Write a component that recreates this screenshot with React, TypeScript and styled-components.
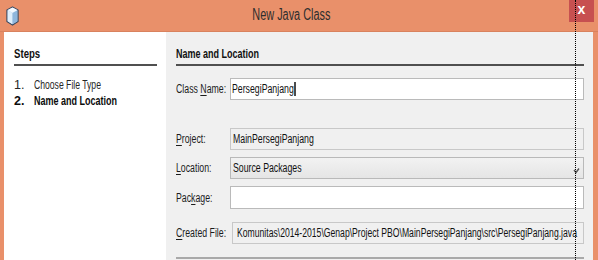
import React from 'react'
import styled, { createGlobalStyle } from 'styled-components'

const GlobalStyle = createGlobalStyle`
	html, body {
		margin: 0;
		padding: 0;
		background: #e9906a;
	}
	body {
		font-family: 'Liberation Sans', Arial, sans-serif;
		font-size: 12.5px;
		color: #111111;
	}
`

// the dialog font is a narrow one, so text is squeezed horizontally
const Txt = styled.span<{ $s?: number; $center?: boolean }>`
	display: inline-block;
	flex: none;
	white-space: nowrap;
	transform: scaleX(${(p) => p.$s ?? 0.7});
	transform-origin: ${(p) => (p.$center ? 'center' : 'left')} center;
`

const CubeIcon = () => (
	<svg width='13' height='20' viewBox='0 0 13 20'>
		<path
			d='M6.5 1 L12 4 L12 15.5 L6.5 19 L1 15.5 L1 4 Z'
			fill='#bcd6ef'
			stroke='#3a4a63'
			strokeWidth='1.3'
			strokeLinejoin='round'
		/>
		<path d='M1.6 4.3 L6.5 7 L6.5 18.2 L1.6 15.2 Z' fill='#dfeefb' />
		<path d='M6.5 7 L11.4 4.3 L11.4 15.2 L6.5 18.2 Z' fill='#8fb6dc' />
		<path d='M1.6 4 L6.5 1.6 L11.4 4 L6.5 6.8 Z' fill='#f4f9ff' />
	</svg>
)

const ComboArrow = () => (
	<svg width='7' height='6' viewBox='0 0 7 6'>
		<path d='M1 2 L3 4.5 L6 0.5' fill='none' stroke='#555555' strokeWidth='1.4' />
	</svg>
)

function App() {
	return (
		<>
			<GlobalStyle />
			<Window>
				<TitleBar>
					<IconSlot>
						<CubeIcon />
					</IconSlot>
					<Title>
						<Txt $s={0.68} $center>
							New Java Class
						</Txt>
					</Title>
					<CloseButton>x</CloseButton>
				</TitleBar>
				<Body>
					<StepsPanel>
						<Heading>
							<Txt $s={0.77}>Steps</Txt>
						</Heading>
						<StepList>
							<Step>
								<StepNo>1.</StepNo>
								<Txt $s={0.69}>Choose File Type</Txt>
							</Step>
							<Step $current>
								<StepNo>2.</StepNo>
								<Txt $s={0.72}>Name and Location</Txt>
							</Step>
						</StepList>
					</StepsPanel>
					<FormPanel>
						<Heading>
							<Txt $s={0.72}>Name and Location</Txt>
						</Heading>
						<Row $top={12}>
							<Label>
								<Txt>
									Class <u>N</u>ame:
								</Txt>
							</Label>
							<Field $pad={1}>
								<Txt>
									PersegiPanjang
									<Caret />
								</Txt>
							</Field>
						</Row>
						<Row $top={28}>
							<Label>
								<Txt>
									<u>P</u>roject:
								</Txt>
							</Label>
							<Field $readOnly>
								<Txt>MainPersegiPanjang</Txt>
							</Field>
						</Row>
						<Row $top={7}>
							<Label>
								<Txt>
									<u>L</u>ocation:
								</Txt>
							</Label>
							<Combo>
								<Txt>Source Packages</Txt>
								<ArrowSlot>
									<ComboArrow />
								</ArrowSlot>
							</Combo>
						</Row>
						<Row $top={7}>
							<Label>
								<Txt>
									Pac<u>k</u>age:
								</Txt>
							</Label>
							<Field $tall />
						</Row>
						<Row $top={13}>
							<Label>
								<Txt>
									<u>C</u>reated File:
								</Txt>
							</Label>
							<Field $readOnly $pad={4} $shift={2}>
								<Txt $s={0.69}>
									Komunitas\2014-2015\Genap\Project
									PBO\MainPersegiPanjang\src\PersegiPanjang.java
								</Txt>
							</Field>
						</Row>
						<Separator />
					</FormPanel>
				</Body>
				<DottedGuide />
			</Window>
		</>
	)
}

const Window = styled.div`
	position: relative;
	width: 598px;
	height: 260px;
	overflow: hidden;
	background: #e9906a;
	display: flex;
	flex-direction: column;
`

const TitleBar = styled.div`
	height: 32px;
	flex: none;
	display: flex;
	align-items: flex-start;
	border-bottom: 1px solid #d9825e;
	box-sizing: border-box;
`

const IconSlot = styled.div`
	padding: 6px 0 0 6px;
`

const Title = styled.div`
	flex: 1;
	display: flex;
	justify-content: center;
	font-size: 16px;
	color: #2e2e2e;
	padding-top: 6px;
	margin-right: 6px;
`

const CloseButton = styled.div`
	width: 25px;
	height: 22px;
	margin-right: 4px;
	background: #c75050;
	color: #ffffff;
	font-weight: bold;
	font-size: 14px;
	line-height: 19px;
	text-align: center;
`

const Body = styled.div`
	flex: 1;
	display: flex;
	padding: 0 5px 0 4px;
`

const StepsPanel = styled.div`
	width: 162px;
	background: #ffffff;
	padding: 15px 9px 0 10px;
	box-sizing: border-box;
`

const Heading = styled.div`
	font-weight: bold;
	line-height: 15px;
	padding-bottom: 2px;
	border-bottom: 2px solid #505050;
	overflow: hidden;
`

const StepList = styled.div`
	margin-top: 12px;
	display: flex;
	flex-direction: column;
	gap: 1px;
`

const Step = styled.div<{ $current?: boolean }>`
	display: flex;
	line-height: 15px;
	font-weight: ${(p) => (p.$current ? 'bold' : 'normal')};
	color: ${(p) => (p.$current ? '#0c0c0c' : '#262626')};
`

const StepNo = styled.span`
	width: 20px;
	flex: none;
`

const FormPanel = styled.div`
	flex: 1;
	min-width: 0;
	background: #f0f0f0;
	padding: 15px 9px 0 10px;
	display: flex;
	flex-direction: column;
`

const Row = styled.div<{ $top: number }>`
	display: grid;
	grid-template-columns: 54px minmax(0, 1fr);
	align-items: center;
	margin-top: ${(p) => p.$top}px;
`

const Label = styled.div`
	color: #1c1c1c;
	u {
		text-underline-offset: 2px;
	}
`

const Field = styled.div<{ $readOnly?: boolean; $tall?: boolean; $pad?: number; $shift?: number }>`
	height: ${(p) => (p.$tall ? 23 : 22)}px;
	box-sizing: border-box;
	border: 1px solid ${(p) => (p.$readOnly ? '#c8c8c8' : '#bababa')};
	background: ${(p) => (p.$readOnly ? '#f0f0f0' : '#ffffff')};
	padding: 0 ${(p) => p.$pad ?? 2}px;
	margin-left: ${(p) => p.$shift ?? 0}px;
	overflow: hidden;
	display: flex;
	align-items: center;
`

const Caret = styled.span`
	display: inline-block;
	width: 1.5px;
	height: 14px;
	background: #000000;
	margin-left: 1px;
	vertical-align: -3px;
`

const Combo = styled.div`
	height: 22px;
	box-sizing: border-box;
	border: 1px solid #b9b9b9;
	background: linear-gradient(#f2f2f2, #e5e5e5);
	padding: 0 2px;
	display: flex;
	align-items: center;
	overflow: hidden;
`

const ArrowSlot = styled.span`
	margin-left: auto;
	margin-right: 1px;
	margin-top: 5px;
	display: flex;
`

const Separator = styled.div`
	margin-top: 13px;
	height: 2px;
	background: #a9a9a9;
`

const DottedGuide = styled.div`
	position: absolute;
	left: 575px;
	top: 0;
	bottom: 0;
	border-left: 1px dotted #000000;
`

export default App
